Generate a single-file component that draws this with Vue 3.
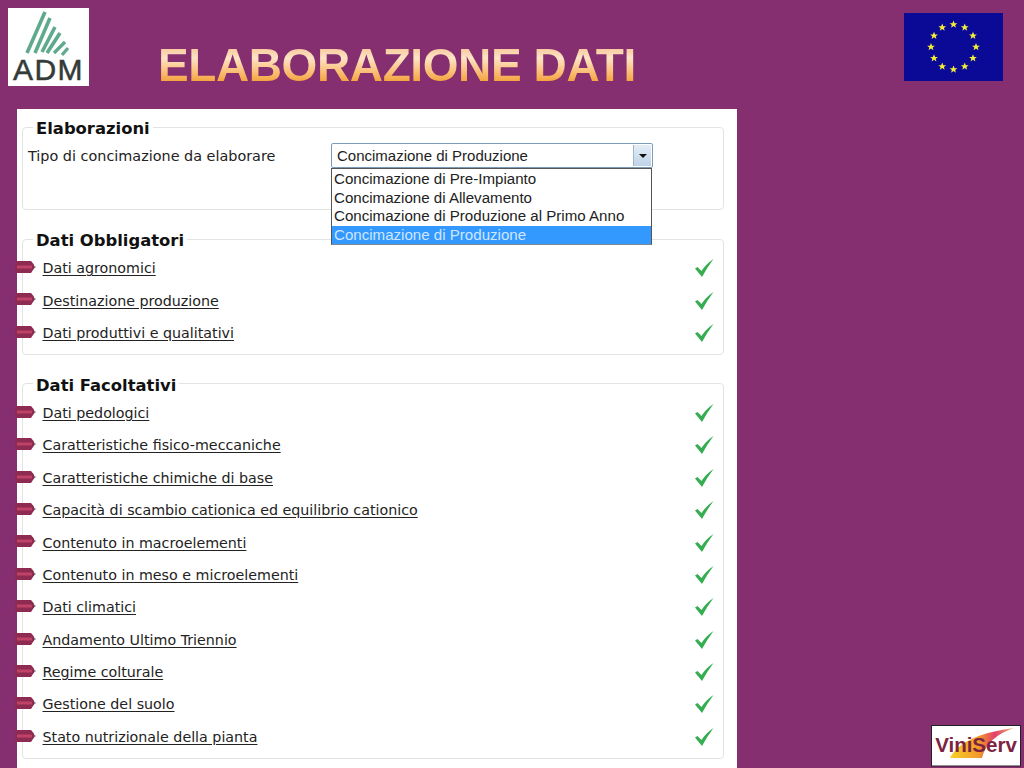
<script setup>
const obbligatori = ['Dati agronomici', 'Destinazione produzione', 'Dati produttivi e qualitativi']
const facoltativi = [
  'Dati pedologici',
  'Caratteristiche fisico-meccaniche',
  'Caratteristiche chimiche di base',
  'Capacità di scambio cationica ed equilibrio cationico',
  'Contenuto in macroelementi',
  'Contenuto in meso e microelementi',
  'Dati climatici',
  'Andamento Ultimo Triennio',
  'Regime colturale',
  'Gestione del suolo',
  'Stato nutrizionale della pianta'
]
const sections = [
  { title: 'Dati Obbligatori', rows: obbligatori },
  { title: 'Dati Facoltativi', rows: facoltativi }
]
const options = [
  'Concimazione di Pre-Impianto',
  'Concimazione di Allevamento',
  'Concimazione di Produzione al Primo Anno',
  'Concimazione di Produzione'
]
const stars = Array.from({ length: 12 }, (_, i) => {
  const a = (i * Math.PI) / 6
  return { x: 49.5 + 22.5 * Math.sin(a), y: 34 - 22.5 * Math.cos(a) }
})
const starPts = '0,-4 1.1,-1.3 3.9,-1.2 1.7,0.5 2.4,3.2 0,1.6 -2.4,3.2 -1.7,0.5 -3.9,-1.2 -1.1,-1.3'
</script>

<template>
  <div class="page">
    <header class="head">
      <svg class="logo" width="81" height="78" viewBox="0 0 81 78">
        <rect width="81" height="78" fill="#fff" />
        <g stroke="#5fa98c" fill="none">
          <path d="M37 4 L19 45" stroke-width="3.6" />
          <path d="M42 10 L27 45" stroke-width="3.6" />
          <path d="M47 19 L34 44" stroke-width="3.6" />
          <path d="M52 25 L39 45" stroke-width="3.6" />
          <path d="M57 34 L46 45" stroke-width="3.4" />
          <path d="M60 40 L54 47" stroke-width="3.2" />
        </g>
        <text x="40.5" y="71.5" class="adm" text-anchor="middle">ADM</text>
      </svg>
      <h1 class="title">ELABORAZIONE DATI</h1>
      <svg class="flag" width="99" height="68" viewBox="0 0 99 68">
        <rect width="99" height="68" fill="#0a0a96" />
        <polygon v-for="(s, i) in stars" :key="i" :points="starPts" :transform="`translate(${s.x} ${s.y})`" fill="#f4ee3a" />
      </svg>
    </header>

    <main class="panel">
      <fieldset class="box first">
        <legend>Elaborazioni</legend>
        <div class="field">
          <span class="label">Tipo di concimazione da elaborare</span>
          <div class="select">
            <span class="value">Concimazione di Produzione</span>
            <span class="arrow"></span>
            <ul class="menu">
              <li v-for="(o, i) in options" :key="o" :class="{ on: i === 3 }">{{ o }}</li>
            </ul>
          </div>
        </div>
      </fieldset>

      <fieldset v-for="s in sections" :key="s.title" class="box">
        <legend>{{ s.title }}</legend>
        <div v-for="r in s.rows" :key="r" class="row">
          <svg class="tag" width="23" height="14" viewBox="0 0 23 14">
            <path d="M1 2.5 Q1 1 2.5 1 H17 L20 4.5 V8.5 L17 13 H2.5 Q1 13 1 11.5 Z" fill="#8e2b52" />
            <rect x="3" y="5.5" width="15" height="3" fill="#bf4369" />
            <path d="M20 5.5 L22 7 L20 8.5 Z" fill="#777" />
          </svg>
          <a class="link" href="#">{{ r }}</a>
          <svg class="check" width="20" height="20" viewBox="0 0 20 20">
            <path d="M1 10.5 L3.5 9 L7.5 13 Q12 6 19.5 1 Q13.5 9 8 19 Z" fill="#37ad52" />
          </svg>
        </div>
      </fieldset>
    </main>

    <svg class="vini" width="90" height="42" viewBox="0 0 90 42">
      <rect x="0.5" y="0.5" width="89" height="40.5" fill="#fff" stroke="#222" />
      <defs>
        <linearGradient id="sw" x1="0" x2="1" y1="0" y2="0">
          <stop offset="0" stop-color="#f8d02a" />
          <stop offset="0.45" stop-color="#f29a2a" />
          <stop offset="0.7" stop-color="#e2406a" />
          <stop offset="1" stop-color="#f0b070" />
        </linearGradient>
      </defs>
      <path d="M19 33 Q30 10 83 3 Q56 12 51 33 Z" fill="url(#sw)" />
      <text x="45" y="27" class="vs" text-anchor="middle">ViniServ</text>
    </svg>
  </div>
</template>

<style>
html, body { margin: 0; background: #852f70; }
</style>

<style scoped>
.page {
  position: relative;
  width: 1024px;
  height: 768px;
  overflow: hidden;
  background: #852f70;
  font-family: "DejaVu Sans", Verdana, sans-serif;
  color: #222;
}
.head {
  display: flex;
  align-items: flex-start;
  height: 101px;
  padding: 8px 0 0 8px;
}
.logo { flex: none; }
.adm { font: 400 30px "Liberation Sans", sans-serif; letter-spacing: 1.5px; fill: #333a38; stroke: #333a38; stroke-width: 0.5; }
.title {
  margin: 34px 0 0 69px;
  font: 700 46px/46px "Liberation Sans", Arial, sans-serif;
  letter-spacing: -0.4px;
  background: linear-gradient(#f7c89a 12%, #fde3c6 35%, #fbc27e 62%, #f5a53f 85%);
  -webkit-background-clip: text;
  background-clip: text;
  color: transparent;
  white-space: nowrap;
}
.flag { flex: none; margin: 5px 21px 0 auto; }
.panel {
  width: 720px;
  height: 659px;
  margin-left: 17px;
  padding: 8px 13px 0 5px;
  box-sizing: border-box;
  background: #fff;
}
.box {
  position: relative;
  margin: 0 0 19px;
  padding: 3px 0 4.6px 11px;
  min-width: 0;
  border: 1px solid #e2e4e4;
  border-radius: 4px;
}
.box legend {
  height: 20px;
  padding: 0 3px;
  margin-left: -1px;
  font-size: 16.4px;
  font-weight: 700;
  line-height: 24px;
  color: #111;
}
.first { height: 91px; padding: 0 0 0 11px; margin-bottom: 19px; }
.field {
  display: flex;
  align-items: flex-start;
  margin-left: -6px;
  padding-top: 6px;
}
.label { width: 303px; font-size: 14.4px; line-height: 27px; }
.select {
  position: relative;
  width: 322px;
  height: 25px;
  box-sizing: border-box;
  border: 1px solid #7a9cb8;
  border-radius: 2px;
  font: 15px/23px "Liberation Sans", Arial, sans-serif;
  color: #222;
}
.value { padding-left: 5px; }
.arrow {
  position: absolute;
  top: 1px;
  right: 1px;
  bottom: 1px;
  width: 17px;
  background: linear-gradient(#e4edf6, #bdd3e8);
  border-left: 1px solid #9fb6cb;
}
.arrow::after {
  content: "";
  position: absolute;
  left: 5px;
  top: 9px;
  border: 4px solid transparent;
  border-top: 4px solid #111;
  border-bottom: 0;
}
.menu {
  position: absolute;
  z-index: 2;
  left: -1px;
  top: 24px;
  width: 321px;
  margin: 0;
  padding: 1px 0 0;
  box-sizing: border-box;
  list-style: none;
  background: #fff;
  border: 1px solid #555;
  border-bottom-color: #7a8a99;
  font-size: 15.1px;
}
.menu li { height: 18.5px; padding-left: 2px; line-height: 18.5px; white-space: nowrap; }
.menu li.on { background: #3399ff; color: #cfe6ff; }
.row {
  position: relative;
  display: flex;
  align-items: center;
  justify-content: space-between;
  height: 32.4px;
  padding-right: 9px;
  font-size: 14.25px;
}
.link { color: #222; text-decoration: underline; text-underline-offset: 2px; margin-left: 8.5px; }
.tag { position: absolute; left: -20px; top: 8px; }
.vini { position: absolute; left: 931px; top: 725px; }
.vs { font: 700 20.5px "Liberation Sans", sans-serif; fill: #7c2340; }
</style>
